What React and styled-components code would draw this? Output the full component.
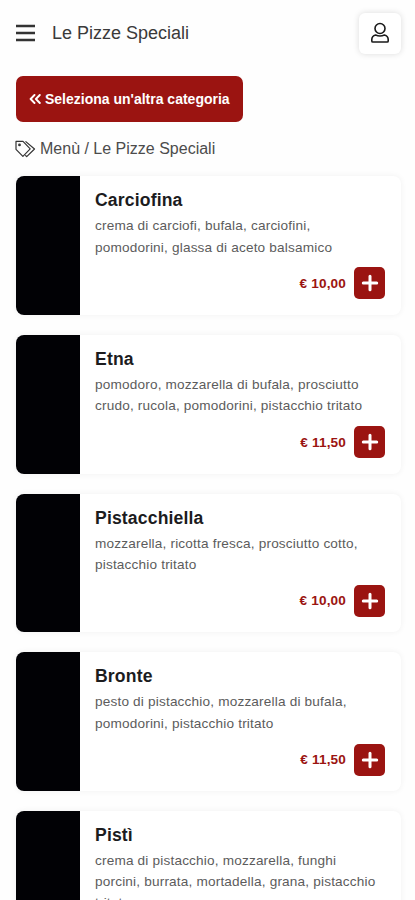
import React from "react";
import styled, { createGlobalStyle } from "styled-components";

const GlobalStyle = createGlobalStyle`
  * {
    box-sizing: border-box;
  }
  body {
    margin: 0;
    background: #fefefe;
    font-family: "Liberation Sans", Arial, sans-serif;
    color: #212529;
  }
  button {
    font-family: inherit;
    border: 0;
    cursor: pointer;
  }
`;

const StyledPage = styled.div`
  height: 900px;
  overflow: hidden;
  padding: 0 14px 0 16px;
`;

const StyledHeader = styled.header`
  display: flex;
  align-items: center;
  height: 66px;
`;

const StyledMenuButton = styled.button`
  display: flex;
  padding: 0;
  background: none;
`;

const StyledPageTitle = styled.h1`
  flex: 1;
  margin: 0 0 0 17px;
  font-size: 18px;
  font-weight: 400;
  line-height: 24px;
  color: #3a3a3a;
`;

const StyledUserButton = styled.button`
  display: flex;
  align-items: center;
  justify-content: center;
  width: 42px;
  height: 41px;
  padding: 0;
  background: white;
  border-radius: 6px;
  box-shadow: 0 0 6px rgba(0, 0, 0, 0.14);
`;

const StyledBackButton = styled.button`
  display: flex;
  align-items: center;
  gap: 4px;
  height: 46px;
  margin-top: 10px;
  padding: 0 13px;
  background: #9b1411;
  border-radius: 7px;
  color: white;
  font-size: 14px;
  font-weight: 700;
  white-space: nowrap;
`;

const StyledBreadcrumb = styled.nav`
  display: flex;
  align-items: center;
  gap: 4px;
  height: 20px;
  margin: 17px 0 17.3px -1px;
  font-size: 16px;
  color: #4c4c4c;
`;

const StyledList = styled.ul`
  display: flex;
  flex-direction: column;
  gap: 20px;
  margin: 0;
  padding: 0;
  list-style: none;
`;

const StyledCard = styled.li`
  display: flex;
  flex-shrink: 0;
  min-height: 138.7px;
  background: white;
  border-radius: 8px;
  box-shadow: 0 0 6px rgba(0, 0, 0, 0.06);
  overflow: hidden;
`;

const StyledPhoto = styled.div`
  flex: 0 0 64px;
  background: #010105;
`;

const StyledCardBody = styled.div`
  display: flex;
  flex: 1;
  flex-direction: column;
  min-width: 0;
  padding: 12px 16px 15.5px 15px;
`;

const StyledName = styled.h2`
  margin: 0 0 3px;
  font-size: 17.6px;
  font-weight: 700;
  line-height: 24px;
  letter-spacing: 0.15px;
  color: #1c1c1e;
`;

const StyledIngredients = styled.p`
  margin: 0;
  font-size: 13.6px;
  line-height: 21.2px;
  letter-spacing: 0.18px;
  white-space: nowrap;
  color: #5c5c5c;
`;

const StyledCardFooter = styled.div`
  display: flex;
  align-items: center;
  justify-content: flex-end;
  gap: 8px;
  margin-top: auto;
`;

const StyledPrice = styled.span`
  font-size: 13.6px;
  font-weight: 700;
  letter-spacing: 0.15px;
  color: #9b1411;
`;

const StyledAddButton = styled.button`
  display: flex;
  align-items: center;
  justify-content: center;
  width: 31px;
  height: 32px;
  padding: 0;
  background: #9b1411;
  border-radius: 5px;
`;

const pizzas = [
  {
    name: "Carciofina",
    ingredients: ["crema di carciofi, bufala, carciofini,", "pomodorini, glassa di aceto balsamico"],
    price: "10,00",
  },
  {
    name: "Etna",
    ingredients: ["pomodoro, mozzarella di bufala, prosciutto", "crudo, rucola, pomodorini, pistacchio tritato"],
    price: "11,50",
  },
  {
    name: "Pistacchiella",
    ingredients: ["mozzarella, ricotta fresca, prosciutto cotto,", "pistacchio tritato"],
    price: "10,00",
  },
  {
    name: "Bronte",
    ingredients: ["pesto di pistacchio, mozzarella di bufala,", "pomodorini, pistacchio tritato"],
    price: "11,50",
  },
  {
    name: "Pistì",
    ingredients: ["crema di pistacchio, mozzarella, funghi", "porcini, burrata, mortadella, grana, pistacchio", "tritato"],
    price: "12,00",
  },
];

function MenuIcon() {
  return (
    <svg width="19" height="18" viewBox="0 0 19 18" fill="none" stroke="#333" strokeWidth="2.3">
      <path d="M0 2h19M0 9h19M0 16h19" />
    </svg>
  );
}

function UserIcon() {
  return (
    <svg width="20" height="22" viewBox="0 0 20 22" fill="none" stroke="#1a1a1a" strokeWidth="1.6">
      <circle cx="10" cy="6.5" r="5" />
      <path
        d="M5.6 13C3.2 13.6 1.8 15.4 1.8 17.6V18.9Q1.8 20 2.9 20H17.1Q18.2 20 18.2 18.9V17.6C18.2 15.4 16.8 13.6 14.4 13C11.8 14.2 8.2 14.2 5.6 13Z"
        strokeLinejoin="round"
      />
    </svg>
  );
}

function BackIcon() {
  return (
    <svg width="12" height="10" viewBox="0 0 12 10" fill="none" stroke="white" strokeWidth="1.9">
      <path d="M5.5 1L1.6 5L5.5 9M10.8 1L6.9 5L10.8 9" strokeLinecap="round" strokeLinejoin="round" />
    </svg>
  );
}

function TagsIcon() {
  return (
    <svg width="21" height="18" viewBox="0 0 21 18" fill="none" stroke="#333" strokeWidth="1.2" strokeLinejoin="round">
      <path d="M1 1.4H8L15.2 8.8L7.9 16.3L1 9.3Z" />
      <path d="M10.5 1.4L19.5 9L11.7 16.6L10.3 15.3" />
      <circle cx="4.5" cy="4.9" r="0.8" />
    </svg>
  );
}

function PlusIcon() {
  return (
    <svg width="18" height="18" viewBox="0 0 18 18" fill="none" stroke="white" strokeWidth="3">
      <path d="M9 2.3v13.4M2.3 9h13.4" strokeLinecap="round" />
    </svg>
  );
}

function PizzaCard({ name, ingredients, price }) {
  return (
    <StyledCard>
      <StyledPhoto />
      <StyledCardBody>
        <StyledName>{name}</StyledName>
        <StyledIngredients>
          {ingredients.map((line, index) => (
            <React.Fragment key={line}>
              {index > 0 && <br />}
              {line}
            </React.Fragment>
          ))}
        </StyledIngredients>
        <StyledCardFooter>
          <StyledPrice>€ {price}</StyledPrice>
          <StyledAddButton aria-label={"Aggiungi " + name}>
            <PlusIcon />
          </StyledAddButton>
        </StyledCardFooter>
      </StyledCardBody>
    </StyledCard>
  );
}

function App() {
  return (
    <>
      <GlobalStyle />
      <StyledPage>
        <StyledHeader>
          <StyledMenuButton aria-label="Menù">
            <MenuIcon />
          </StyledMenuButton>
          <StyledPageTitle>Le Pizze Speciali</StyledPageTitle>
          <StyledUserButton aria-label="Profilo">
            <UserIcon />
          </StyledUserButton>
        </StyledHeader>
        <StyledBackButton>
          <BackIcon />
          Seleziona un'altra categoria
        </StyledBackButton>
        <StyledBreadcrumb>
          <TagsIcon />
          <span>Menù / Le Pizze Speciali</span>
        </StyledBreadcrumb>
        <StyledList>
          {pizzas.map((pizza) => (
            <PizzaCard key={pizza.name} {...pizza} />
          ))}
        </StyledList>
      </StyledPage>
    </>
  );
}

export default App;
